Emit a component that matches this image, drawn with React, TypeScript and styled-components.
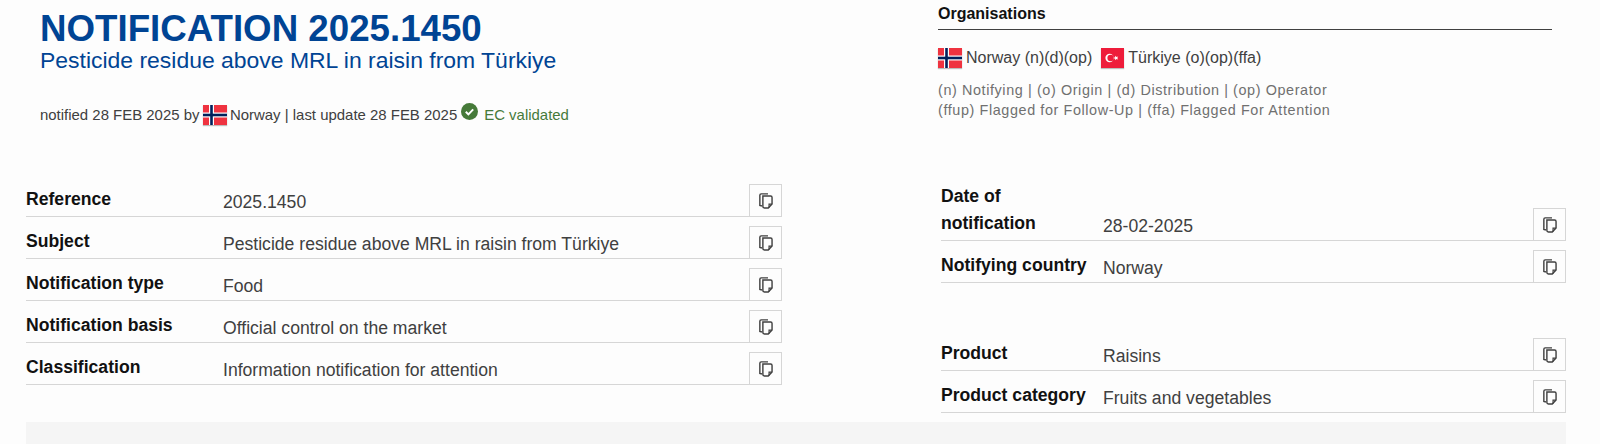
import React from "react";
import styled, { createGlobalStyle } from "styled-components";

const Global = createGlobalStyle`
  html, body { margin: 0; padding: 0; background: #fdfdfd; }
  body { font-family: "Liberation Sans", Arial, sans-serif; color: #333; overflow: hidden; height: 444px; }
`;

const Page = styled.div`
  width: 1600px;
  height: 444px;
  overflow: hidden;
  box-sizing: border-box;
  padding: 0 34px 0 26px;
`;

const Columns = styled.div`
  display: grid;
  grid-template-columns: 756px 625px;
  column-gap: 159px;
`;

const Intro = styled.header`
  height: 184px;
  box-sizing: border-box;
  padding: 9px 0 0 14px;
`;

const Title = styled.h1`
  margin: 0;
  font-size: 36.7px;
  line-height: 40px;
  font-weight: 700;
  color: #004494;
`;

const Subtitle = styled.div`
  font-size: 22.95px;
  line-height: 26px;
  color: #004494;
  margin-top: -2px;
`;

const Meta = styled.div`
  display: flex;
  align-items: center;
  margin-top: 32px;
  font-size: 14.95px;
  line-height: 20px;
  color: #404040;
  white-space: pre;
`;

const Validated = styled.span`
  color: #467a39;
`;

const Orgs = styled.section`
  height: 183px;
  box-sizing: border-box;
  padding: 5px 14px 0 0;
  margin-left: -3px;
`;

const OrgHeading = styled.h2`
  margin: 0;
  font-size: 16px;
  line-height: 18px;
  font-weight: 700;
  color: #111;
  padding-bottom: 6px;
  border-bottom: 1px solid #404040;
`;

const OrgList = styled.div`
  display: flex;
  align-items: center;
  gap: 9px;
  margin-top: 17px;
  font-size: 16px;
  line-height: 22px;
  color: #404040;
`;

const Org = styled.span`
  display: inline-flex;
  align-items: center;
  gap: 4px;
`;

const Legend = styled.div`
  margin-top: 11px;
  font-size: 14.4px;
  line-height: 20.4px;
  letter-spacing: 0.6px;
  color: #707070;
`;

const Rows = styled.div`
  display: flex;
  flex-direction: column;
  gap: 9px;
`;

const Spacer = styled.div`
  height: 37px;
`;

const Row = styled.div<{ $label: number }>`
  display: grid;
  grid-template-columns: ${(p) => p.$label}px 1fr 33px;
  align-items: end;
  box-sizing: border-box;
  border-bottom: 1px solid #d6d6d6;
`;

const Label = styled.div`
  font-size: 17.6px;
  line-height: 27px;
  font-weight: 700;
  color: #111;
  padding: 0 8px 3px 0;
`;

const Value = styled.div`
  font-size: 17.6px;
  line-height: 22px;
  color: #404040;
  padding-bottom: 3px;
`;

const CopyButton = styled.button`
  width: 33px;
  height: 33px;
  margin-bottom: -1px;
  padding: 0;
  display: flex;
  align-items: center;
  justify-content: center;
  background: #fdfdfd;
  border: 1px solid #d6d6d6;
`;

const Panel = styled.div`
  height: 40px;
  margin-top: 9px;
  background: #f5f5f5;
`;

const FlagSvg = styled.svg`
  display: block;
  flex: none;
  box-shadow: 0 1px 1px rgba(0, 0, 0, 0.25);
`;

const Inline = styled.span`
  display: inline-flex;
  margin: 0 3px 0 3.5px;
`;

const Check = styled.span`
  display: inline-flex;
  margin: -7px 6px 0 4px;
`;

const Norway = ({ w, h }: { w: number; h: number }) => (
  <FlagSvg width={w} height={h} viewBox="0 0 24 20" preserveAspectRatio="none">
    <rect width="24" height="20" fill="#ef3340" />
    <rect x="6" width="5" height="20" fill="#fff" />
    <rect y="7.5" width="24" height="5" fill="#fff" />
    <rect x="7.2" width="2.6" height="20" fill="#00205b" />
    <rect y="8.7" width="24" height="2.6" fill="#00205b" />
  </FlagSvg>
);

const Turkey = ({ w, h }: { w: number; h: number }) => (
  <FlagSvg width={w} height={h} viewBox="0 0 23 20" preserveAspectRatio="none">
    <rect width="23" height="20" fill="#ee1c3a" />
    <circle cx="8.6" cy="10" r="4.2" fill="#fff" />
    <circle cx="9.7" cy="10" r="3.3" fill="#ee1c3a" />
    <polygon
      points="11.8,10 14.2,9.2 14.2,7.8 15.6,8.9 17.2,8.4 16.3,10 17.2,11.6 15.6,11.1 14.2,12.2 14.2,10.8"
      fill="#fff"
    />
  </FlagSvg>
);

const CheckIcon = () => (
  <svg width="17" height="17" viewBox="0 0 17 17">
    <circle cx="8.5" cy="8.5" r="8.5" fill="#467a39" />
    <path d="M4.8 8.8l2.6 2.6 4.8-5" fill="none" stroke="#fff" strokeWidth="2" />
  </svg>
);

const CopyIcon = () => (
  <svg width="14" height="16" viewBox="0.5 0.8 14.8 16.9" fill="none" stroke="#404040" strokeWidth="1.5">
    <path d="M3.6 14.5 1.4 14V3.2c0-.9.5-1.5 1.4-1.5H10" />
    <path d="M4.6 4h8.2c.9 0 1.5.6 1.5 1.5v7L10.3 16.6H6.2c-.9 0-1.6-.6-1.6-1.5z" />
    <path d="M14.3 12.6h-3.2v3.8" strokeWidth="1.2" />
  </svg>
);

type Item = { label: string; value: string };

const DataRow = ({ item, labelWidth }: { item: Item; labelWidth: number }) => (
  <Row $label={labelWidth}>
    <Label>{item.label}</Label>
    <Value>{item.value}</Value>
    <CopyButton type="button" aria-label={`Copy ${item.label}`}>
      <CopyIcon />
    </CopyButton>
  </Row>
);

const leftRows: Item[] = [
  { label: "Reference", value: "2025.1450" },
  { label: "Subject", value: "Pesticide residue above MRL in raisin from Türkiye" },
  { label: "Notification type", value: "Food" },
  { label: "Notification basis", value: "Official control on the market" },
  { label: "Classification", value: "Information notification for attention" },
];

const dateRows: Item[] = [
  { label: "Date of notification", value: "28-02-2025" },
  { label: "Notifying country", value: "Norway" },
];

const productRows: Item[] = [
  { label: "Product", value: "Raisins" },
  { label: "Product category", value: "Fruits and vegetables" },
];

export default function App() {
  return (
    <Page>
      <Global />
      <Columns>
        <div>
          <Intro>
            <Title>NOTIFICATION 2025.1450</Title>
            <Subtitle>Pesticide residue above MRL in raisin from Türkiye</Subtitle>
            <Meta>
              notified 28 FEB 2025 by
              <Inline>
                <Norway w={24} h={20} />
              </Inline>
              Norway | last update 28 FEB 2025
              <Check>
                <CheckIcon />
              </Check>
              <Validated>EC validated</Validated>
            </Meta>
          </Intro>
          <Rows>
            {leftRows.map((item) => (
              <DataRow key={item.label} item={item} labelWidth={197} />
            ))}
          </Rows>
        </div>
        <div>
          <Orgs>
            <OrgHeading>Organisations</OrgHeading>
            <OrgList>
              <Org>
                <Norway w={24} h={20} />
                Norway (n)(d)(op)
              </Org>
              <Org>
                <Turkey w={23} h={20} />
                Türkiye (o)(op)(ffa)
              </Org>
            </OrgList>
            <Legend>
              (n) Notifying | (o) Origin | (d) Distribution | (op) Operator
              <br />
              (ffup) Flagged for Follow-Up | (ffa) Flagged For Attention
            </Legend>
          </Orgs>
          <Rows>
            {dateRows.map((item) => (
              <DataRow key={item.label} item={item} labelWidth={162} />
            ))}
            <Spacer />
            {productRows.map((item) => (
              <DataRow key={item.label} item={item} labelWidth={162} />
            ))}
          </Rows>
        </div>
      </Columns>
      <Panel />
    </Page>
  );
}
